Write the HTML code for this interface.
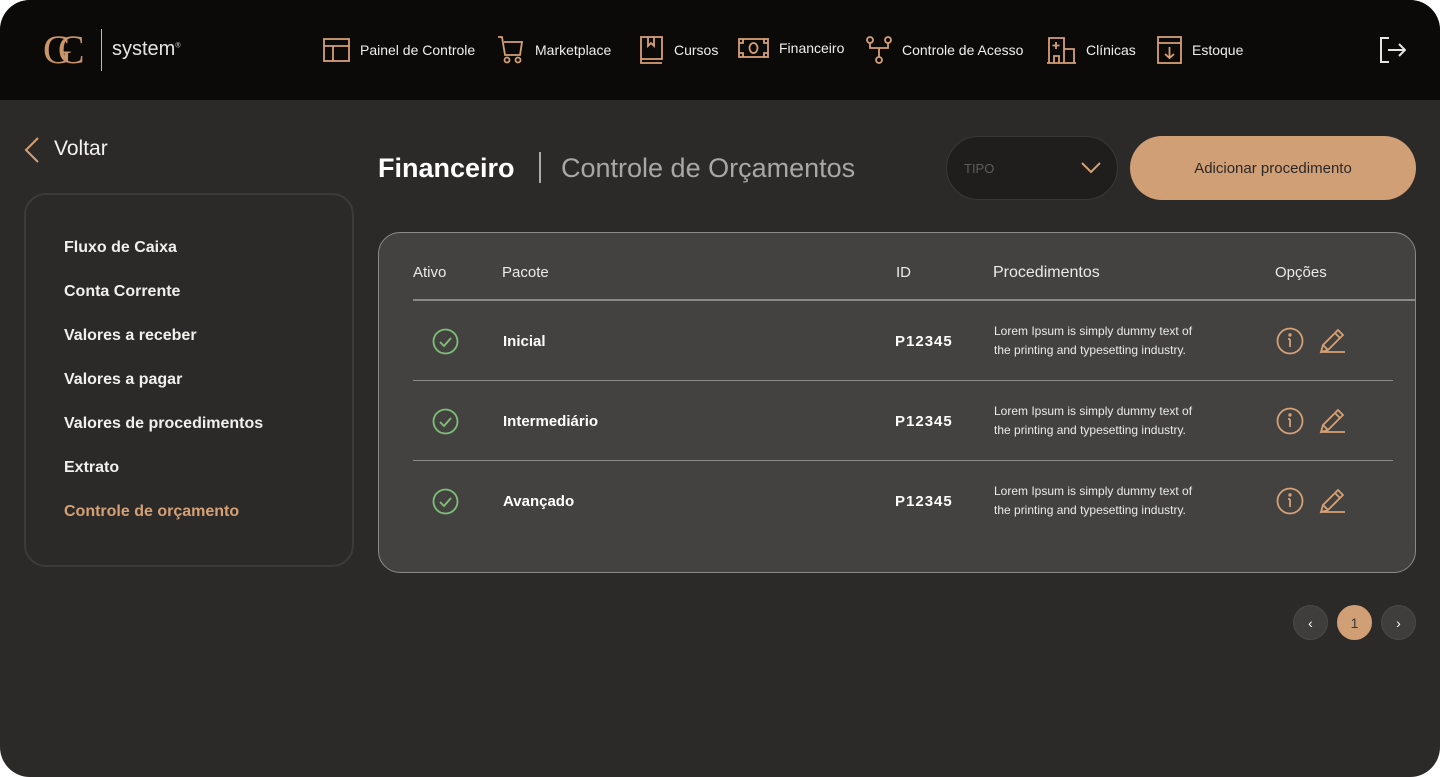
<!DOCTYPE html>
<html><head><meta charset="utf-8"><style>
*{margin:0;padding:0;box-sizing:border-box}
html,body{width:1440px;height:777px;background:#fff;overflow:hidden}
body{font-family:"Liberation Sans",sans-serif;color:#fff}
.frame{position:absolute;left:0;top:0;width:1440px;height:777px;background:#2c2a28;border-radius:30px;overflow:hidden}
.hdr{position:absolute;left:0;top:0;width:1440px;height:100px;background:#0b0a09}
.abs{position:absolute;white-space:nowrap}
.nav{position:absolute;top:37px;display:flex;align-items:center;font-size:14px;color:#f0eeea;white-space:nowrap}
.nav svg{margin-right:10px}
.menu{position:absolute;left:24px;top:193px;width:330px;height:374px;border:2px solid #3d3b39;border-radius:22px}
.menu div{position:absolute;left:38px;font-size:16px;font-weight:bold;color:#f2f0ec;white-space:nowrap}
.tbl{position:absolute;left:378px;top:232px;width:1038px;height:341px;background:#434240;border:1px solid #8a8987;border-radius:22px}
.th{position:absolute;top:31px;font-size:15px;color:#eceae6}
.row{position:absolute;left:34px;width:980px;height:80px;border-top:1px solid #8a8987}
.pg{position:absolute;top:605px;width:35px;height:35px;border-radius:50%;background:#3f3e3c;border:1px solid #4a4947;display:flex;align-items:center;justify-content:center;font-size:14px}
.r{position:absolute;white-space:nowrap}
.d{font-size:12px;line-height:19px;color:#ecebe8}
</style></head><body>
<div class="frame">
<div class="hdr">
 <div class="abs" style="left:43px;top:28px;font-family:'Liberation Serif',serif;font-size:40px;color:#c9956a;letter-spacing:-14px;line-height:44px">GC</div>
 <div class="abs" style="left:101px;top:29px;width:1px;height:42px;background:#bbb"></div>
 <div class="abs" style="left:112px;top:38px;font-size:20px;color:#e6e4e0">system<sup style="font-size:7px">®</sup></div>

 <div class="nav" style="left:323px"><svg width="27" height="26" viewBox="0 0 27 26" fill="none" stroke="#d4a076" stroke-width="1.8"><rect x="1" y="2" width="25" height="22"/><path d="M1 9h25M10 9v15"/></svg>Painel de Controle</div>
 <div class="nav" style="left:497px;top:35px"><svg width="28" height="30" viewBox="0 0 28 30" fill="none" stroke="#d4a076" stroke-width="1.8"><path d="M1 2h4l3 18h15l2-13H7"/><circle cx="10" cy="25" r="2.5"/><circle cx="21" cy="25" r="2.5"/></svg>Marketplace</div>
 <div class="nav" style="left:640px;top:36px"><svg width="24" height="28" viewBox="0 0 24 28" fill="none" stroke="#d4a076" stroke-width="1.8"><rect x="1" y="1" width="21" height="22"/><path d="M1 23v4h21M8 1v9l3-3 3 3V1"/></svg>Cursos</div>
 <div class="nav" style="left:738px"><svg width="31" height="22" viewBox="0 0 31 22" fill="none" stroke="#d4a076" stroke-width="1.8"><rect x="1" y="2" width="29" height="18"/><path d="M1 6h4V2M26 2v4h4M1 16h4v4M26 20v-4h4"/><ellipse cx="15.5" cy="11" rx="4" ry="5"/></svg>Financeiro</div>
 <div class="nav" style="left:866px;top:36px"><svg width="26" height="28" viewBox="0 0 26 28" fill="none" stroke="#d4a076" stroke-width="1.8"><circle cx="4" cy="4" r="3"/><circle cx="22" cy="4" r="3"/><circle cx="13" cy="24" r="3"/><path d="M4 7v5h18V7M13 12v9"/></svg>Controle de Acesso</div>
 <div class="nav" style="left:1047px;top:36px"><svg width="29" height="28" viewBox="0 0 29 28" fill="none" stroke="#d4a076" stroke-width="1.8"><path d="M2 27V2h15v25M17 13h10v14M0 27h29M9 6v7M5.5 9.5h7M7 27v-7h5v7"/></svg>Clínicas</div>
 <div class="nav" style="left:1157px;top:36px"><svg width="25" height="28" viewBox="0 0 25 28" fill="none" stroke="#d4a076" stroke-width="1.8"><rect x="1" y="1" width="23" height="26"/><path d="M1 7h23M12.5 11v11M8 18l4.5 4 4.5-4"/></svg>Estoque</div>
 <svg class="abs" style="left:1380px;top:37px" width="26" height="26" viewBox="0 0 26 26" fill="none" stroke="#e6e4e0" stroke-width="2"><path d="M9 1H1v24h8M8 13h17M19 7l6 6-6 6"/></svg>
</div>

<svg class="abs" style="left:24px;top:137px" width="16" height="26" viewBox="0 0 16 26" fill="none" stroke="#d4a076" stroke-width="2"><path d="M14 1L2 13l12 12"/></svg>
<div class="abs" style="left:54px;top:137px;font-size:21px;color:#f4f2ee">Voltar</div>

<div class="menu">
 <div style="top:44px">Fluxo de Caixa</div>
 <div style="top:88px">Conta Corrente</div>
 <div style="top:132px">Valores a receber</div>
 <div style="top:176px">Valores a pagar</div>
 <div style="top:220px">Valores de procedimentos</div>
 <div style="top:264px">Extrato</div>
 <div style="top:308px;color:#d4a076">Controle de orçamento</div>
</div>

<div class="abs" style="left:378px;top:153px;font-size:27px;font-weight:bold;color:#fff">Financeiro</div>
<div class="abs" style="left:539px;top:152px;width:2px;height:31px;background:#aaa"></div>
<div class="abs" style="left:561px;top:153px;font-size:27px;color:#a9a7a4">Controle de Orçamentos</div>

<div class="abs" style="left:946px;top:136px;width:172px;height:64px;border-radius:32px;background:#1f1e1d;border:1px solid #3a3937"></div>
<div class="abs" style="left:964px;top:161px;font-size:13px;color:#5e5c59">TIPO</div>
<svg class="abs" style="left:1081px;top:162px" width="20" height="12" viewBox="0 0 20 12" fill="none" stroke="#d4a076" stroke-width="2"><path d="M1 1l9 9 9-9"/></svg>
<div class="abs" style="left:1130px;top:136px;width:286px;height:64px;border-radius:32px;background:#d19f76;display:flex;align-items:center;justify-content:center;font-size:15px;color:#2a2826">Adicionar procedimento</div>

<div class="tbl">
 <div class="th" style="left:34px">Ativo</div>
 <div class="th" style="left:123px">Pacote</div>
 <div class="th" style="left:517px">ID</div>
 <div class="th" style="left:614px;font-size:16px">Procedimentos</div>
 <div class="th" style="left:896px">Opções</div>
 <div class="abs" style="left:34px;top:66px;width:1003px;height:2px;background:#8a8987"></div>
 <div class="row" style="top:147px"></div>
 <div class="row" style="top:227px"></div>
</div>
</div>
<div style="position:absolute;left:0;top:0">
 <svg class="r" style="left:432px;top:328px" width="27" height="27" viewBox="0 0 27 27" fill="none" stroke="#7fbf7a" stroke-width="1.8"><circle cx="13.5" cy="13.5" r="12"/><path d="M8 14l4 4 7-8"/></svg>
 <div class="r" style="left:503px;top:333px;font-size:15px;font-weight:bold">Inicial</div>
 <div class="r" style="left:895px;top:333px;font-size:15px;font-weight:bold;letter-spacing:1px">P12345</div>
 <div class="r d" style="left:994px;top:322px">Lorem Ipsum is simply dummy text of<br>the printing and typesetting industry.</div>
 <svg class="r" style="left:1276px;top:327px" width="28" height="28" viewBox="0 0 28 28" fill="none" stroke="#d4a076" stroke-width="1.8"><circle cx="14" cy="14" r="12.5"/><path d="M14 12v8M12 12h2"/><circle cx="14" cy="8" r="0.8" fill="#d4a076"/></svg>
 <svg class="r" style="left:1319px;top:327px" width="28" height="27" viewBox="0 0 28 27" fill="none" stroke="#d4a076" stroke-width="1.8"><path d="M2 25l2-7L19 3l5 5L9 23zM4 18l5 5M16 6l5 5M2 25h24"/></svg>

 <svg class="r" style="left:432px;top:408px" width="27" height="27" viewBox="0 0 27 27" fill="none" stroke="#7fbf7a" stroke-width="1.8"><circle cx="13.5" cy="13.5" r="12"/><path d="M8 14l4 4 7-8"/></svg>
 <div class="r" style="left:503px;top:413px;font-size:15px;font-weight:bold">Intermediário</div>
 <div class="r" style="left:895px;top:413px;font-size:15px;font-weight:bold;letter-spacing:1px">P12345</div>
 <div class="r d" style="left:994px;top:402px">Lorem Ipsum is simply dummy text of<br>the printing and typesetting industry.</div>
 <svg class="r" style="left:1276px;top:407px" width="28" height="28" viewBox="0 0 28 28" fill="none" stroke="#d4a076" stroke-width="1.8"><circle cx="14" cy="14" r="12.5"/><path d="M14 12v8M12 12h2"/><circle cx="14" cy="8" r="0.8" fill="#d4a076"/></svg>
 <svg class="r" style="left:1319px;top:407px" width="28" height="27" viewBox="0 0 28 27" fill="none" stroke="#d4a076" stroke-width="1.8"><path d="M2 25l2-7L19 3l5 5L9 23zM4 18l5 5M16 6l5 5M2 25h24"/></svg>

 <svg class="r" style="left:432px;top:488px" width="27" height="27" viewBox="0 0 27 27" fill="none" stroke="#7fbf7a" stroke-width="1.8"><circle cx="13.5" cy="13.5" r="12"/><path d="M8 14l4 4 7-8"/></svg>
 <div class="r" style="left:503px;top:493px;font-size:15px;font-weight:bold">Avançado</div>
 <div class="r" style="left:895px;top:493px;font-size:15px;font-weight:bold;letter-spacing:1px">P12345</div>
 <div class="r d" style="left:994px;top:482px">Lorem Ipsum is simply dummy text of<br>the printing and typesetting industry.</div>
 <svg class="r" style="left:1276px;top:487px" width="28" height="28" viewBox="0 0 28 28" fill="none" stroke="#d4a076" stroke-width="1.8"><circle cx="14" cy="14" r="12.5"/><path d="M14 12v8M12 12h2"/><circle cx="14" cy="8" r="0.8" fill="#d4a076"/></svg>
 <svg class="r" style="left:1319px;top:487px" width="28" height="27" viewBox="0 0 28 27" fill="none" stroke="#d4a076" stroke-width="1.8"><path d="M2 25l2-7L19 3l5 5L9 23zM4 18l5 5M16 6l5 5M2 25h24"/></svg>

 <div class="pg" style="left:1293px">‹</div>
 <div class="pg" style="left:1337px;background:#d19f76;border-color:#d19f76;color:#3a3836">1</div>
 <div class="pg" style="left:1381px">›</div>
</div>
</body></html>
